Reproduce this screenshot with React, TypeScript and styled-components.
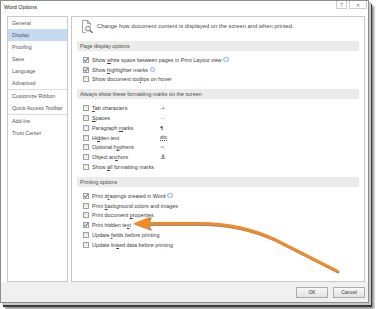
import React from 'react'
import styled, { createGlobalStyle } from 'styled-components'

const GlobalStyle = createGlobalStyle`
	html, body {
		margin: 0;
		padding: 0;
		background: #fff;
	}
	body {
		font-family: 'Liberation Sans', Arial, sans-serif;
		color: #333;
	}
`

const Stage = styled.div`
	position: relative;
	width: 377px;
	height: 309px;
	overflow: hidden;
`

const Window = styled.div`
	width: 369px;
	height: 303px;
	box-sizing: border-box;
	border: 1px solid #8d8d8d;
	background: #fff;
	display: flex;
	flex-direction: column;
	box-shadow: 2px 2px 0 #c8c8c8, 3px 4px 0 #3c3c3c, 5px 6px 2px rgba(0, 0, 0, 0.45);
`

const TitleBar = styled.div`
	height: 14px;
	display: flex;
	align-items: flex-start;
	justify-content: space-between;
	padding-left: 3px;
`

const TitleText = styled.div`
	font-size: 5.4px;
	line-height: 12px;
	color: #222;
`

const TitleButtons = styled.div`
	display: flex;
	gap: 2px;
	margin-right: 1px;
`

const TitleButton = styled.div<{ $w: number }>`
	width: ${(p) => p.$w}px;
	height: 8px;
	box-sizing: border-box;
	border: 1px solid #cdcdcd;
	border-top: none;
	display: flex;
	align-items: center;
	justify-content: center;
	font-size: 5px;
	color: #777;
`

const Panels = styled.div`
	height: 267px;
	box-sizing: border-box;
	display: flex;
	gap: 3px;
	padding: 1px 3px 0 6px;
`

const Sidebar = styled.div`
	width: 61px;
	box-sizing: border-box;
	border: 1px solid #c9c9c9;
	background: #fff;
`

const NavItem = styled.div<{ $active?: boolean }>`
	height: 12px;
	line-height: 12px;
	padding-left: 4px;
	font-size: 5.3px;
	color: #555;
	white-space: nowrap;
	background: ${(p) => (p.$active ? '#c6daf2' : 'transparent')};
`

const NavSeparator = styled.div`
	height: 1px;
	background: #dcdcdc;
`

const Content = styled.div`
	flex: 1;
	box-sizing: border-box;
	border: 1px solid #c9c9c9;
	padding: 0 5px;
	background: #fff;
`

const Header = styled.div`
	height: 24px;
	box-sizing: border-box;
	padding: 3px 0 0 5px;
	display: flex;
	align-items: flex-start;
	gap: 3px;
`

const HeaderText = styled.div`
	font-size: 5.8px;
	line-height: 13px;
	color: #4a4a4a;
	white-space: nowrap;
`

const Band = styled.div`
	height: 10px;
	line-height: 10px;
	padding-left: 3px;
	background: #ebebeb;
	font-size: 5.4px;
	color: #4a4a4a;
	white-space: nowrap;
`

const List = styled.div`
	padding: 4px 0 5px 6px;
`

const Row = styled.div`
	height: 9.8px;
	display: flex;
	align-items: center;
	font-size: 5.4px;
	color: #3c3c3c;
	white-space: nowrap;
`

const Box = styled.div`
	width: 6px;
	height: 6px;
	box-sizing: border-box;
	margin-right: 3px;
	border: 1px solid #a0a0a0;
	background: linear-gradient(#e4e4e4, #fafafa);
	position: relative;
	flex-shrink: 0;

	svg {
		position: absolute;
		left: -1px;
		top: -1px;
	}
`

const Label = styled.span<{ $w?: number }>`
	display: inline-block;
	width: ${(p) => (p.$w ? `${p.$w}px` : 'auto')};

	u {
		text-decoration-thickness: 0.4px;
		text-underline-offset: 0.6px;
	}
`

const Mark = styled.span<{ $bold?: boolean }>`
	font-family: 'DejaVu Sans', sans-serif;
	font-size: ${(p) => (p.$bold ? 6.5 : 5.2)}px;
	color: #333;
	font-weight: ${(p) => (p.$bold ? 700 : 400)};
`

const HiddenMark = styled.span`
	font-size: 4.6px;
	color: #444;
	border-bottom: 0.6px dotted #444;
	line-height: 5px;
`

const Info = styled.span`
	display: inline-block;
	width: 3.4px;
	height: 3.4px;
	margin-left: 1.5px;
	border-radius: 50%;
	border: 0.6px solid #8bbbe8;
	background: #e8f1fb;
	vertical-align: 0px;
`

const Footer = styled.div`
	flex: 1;
	background: #f0f0f0;
	display: flex;
	justify-content: flex-end;
	align-items: center;
	gap: 5px;
	padding-right: 3px;
`

const Button = styled.button`
	width: 32px;
	height: 11px;
	box-sizing: border-box;
	padding: 0;
	border: 1px solid #acacac;
	background: linear-gradient(#f8f8f8, #e2e2e2);
	font-family: inherit;
	font-size: 5px;
	color: #333;
`

const ArrowLayer = styled.svg`
	position: absolute;
	left: 0;
	top: 0;
	pointer-events: none;
	filter: drop-shadow(1px 1.5px 0.6px rgba(0, 0, 0, 0.45));
`

const Check: React.FC<{ checked?: boolean }> = ({ checked }) => (
	<Box>
		{checked && (
			<svg width="6" height="6" viewBox="0 0 6 6">
				<path d="M1.3 3.1 L2.5 4.4 L4.8 1.3" fill="none" stroke="#2c4a7c" strokeWidth="0.9" />
			</svg>
		)}
	</Box>
)

const DocIcon = () => (
	<svg width="12" height="13" viewBox="0 0 12 13">
		<path
			d="M0.5 0.5 H5.5 L8.5 3.5 V5.8 M5.5 0.5 V3.5 H8.5 M0.5 0.5 V12.5 H3.6"
			fill="none"
			stroke="#8a8a8a"
			strokeWidth="0.8"
		/>
		<circle cx="6" cy="8.6" r="2.4" fill="#fff" stroke="#6a6a6a" strokeWidth="0.9" />
		<path d="M7.7 10.4 L10.6 12.8" stroke="#555" strokeWidth="1.2" />
	</svg>
)

type Option = { label: React.ReactNode; checked?: boolean; info?: boolean; mark?: React.ReactNode }

const pageOptions: Option[] = [
	{
		label: (
			<>
				Show <u>w</u>hite space between pages in Print Layout view
			</>
		),
		checked: true,
		info: true,
	},
	{
		label: (
			<>
				Show <u>h</u>ighlighter marks
			</>
		),
		checked: true,
		info: true,
	},
	{
		label: (
			<>
				Show document too<u>l</u>tips on hover
			</>
		),
	},
]

const markOptions: Option[] = [
	{ label: <><u>T</u>ab characters</>, mark: <Mark>→</Mark> },
	{ label: <><u>S</u>paces</>, mark: <Mark>···</Mark> },
	{ label: <>Paragraph <u>m</u>arks</>, mark: <Mark>¶</Mark> },
	{ label: <>Hi<u>d</u>den text</>, mark: <HiddenMark>abc</HiddenMark> },
	{ label: <>Optional h<u>y</u>phens</>, mark: <Mark>¬</Mark> },
	{ label: <>Object an<u>c</u>hors</>, mark: <Mark $bold>⚓</Mark> },
	{ label: <>Show <u>a</u>ll formatting marks</> },
]

const printOptions: Option[] = [
	{ label: <>Print d<u>r</u>awings created in Word</>, checked: true, info: true },
	{ label: <>Print <u>b</u>ackground colors and images</> },
	{ label: <>Print document <u>p</u>roperties</> },
	{ label: <>Print hidden te<u>x</u>t</>, checked: true },
	{ label: <>Update <u>f</u>ields before printing</> },
	{ label: <>Update lin<u>k</u>ed data before printing</> },
]

const OptionList: React.FC<{ items: Option[]; labelWidth?: number }> = ({ items, labelWidth }) => (
	<List>
		{items.map((o, i) => (
			<Row key={i}>
				<Check checked={o.checked} />
				<Label $w={labelWidth}>
					{o.label}
					{o.info && <Info />}
				</Label>
				{o.mark}
			</Row>
		))}
	</List>
)

const navTop = ['General', 'Display', 'Proofing', 'Save', 'Language', 'Advanced']
const navMid = ['Customize Ribbon', 'Quick Access Toolbar']
const navBottom = ['Add-Ins', 'Trust Center']

export default function App() {
	return (
		<Stage>
			<GlobalStyle />
			<Window>
				<TitleBar>
					<TitleText>Word Options</TitleText>
					<TitleButtons>
						<TitleButton $w={11}>?</TitleButton>
						<TitleButton $w={18}>✕</TitleButton>
					</TitleButtons>
				</TitleBar>
				<Panels>
					<Sidebar>
						{navTop.map((n) => (
							<NavItem key={n} $active={n === 'Display'}>
								{n}
							</NavItem>
						))}
						<NavSeparator />
						{navMid.map((n) => (
							<NavItem key={n}>{n}</NavItem>
						))}
						<NavSeparator />
						{navBottom.map((n) => (
							<NavItem key={n}>{n}</NavItem>
						))}
					</Sidebar>
					<Content>
						<Header>
							<DocIcon />
							<HeaderText>
								Change how document content is displayed on the screen and when printed.
							</HeaderText>
						</Header>
						<Band>Page display options</Band>
						<OptionList items={pageOptions} />
						<Band>Always show these formatting marks on the screen</Band>
						<OptionList items={markOptions} labelWidth={68} />
						<Band>Printing options</Band>
						<OptionList items={printOptions} />
					</Content>
				</Panels>
				<Footer>
					<Button>OK</Button>
					<Button>Cancel</Button>
				</Footer>
			</Window>
			<ArrowLayer width="377" height="309" viewBox="0 0 377 309">
				<path
					d="M147 223.5 L200 223.5 Q240 223.5 275 239.5 L337 271"
					fill="none"
					stroke="#f6891f"
					strokeWidth="3"
					strokeLinecap="round"
				/>
				<path d="M133 223.5 L151 216.5 L148 223.5 L151 230 Z" fill="#f6891f" />
			</ArrowLayer>
		</Stage>
	)
}
